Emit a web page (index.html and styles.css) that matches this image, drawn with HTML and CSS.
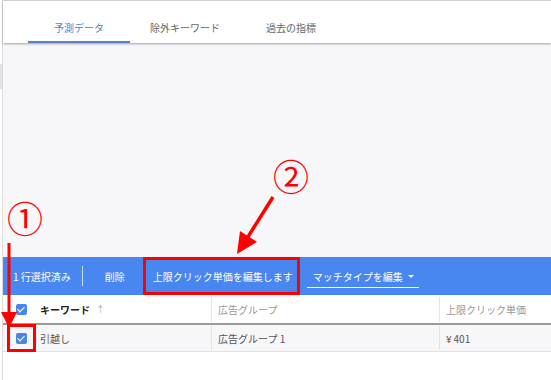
FILE: index.html
```html
<!DOCTYPE html>
<html lang="ja">
<head>
    <meta charset="UTF-8">
    <title>キーワードプランナー</title>
    <link rel="stylesheet" href="styles.css">
</head>
<body>
    <div class="frame">
        <!-- Tabs -->
        <div class="tabs">
            <a class="tab active" href="#forecast">予測データ</a>
            <a class="tab" href="#negative">除外キーワード</a>
            <a class="tab" href="#history">過去の指標</a>
        </div>

        <!-- Empty area above table -->
        <div class="content-area">
            <div class="scroll-mark"></div>
        </div>

        <!-- Selection bar -->
        <div class="action-bar">
            <span class="selected-count">1 行選択済み</span>
            <span class="bar-divider"></span>
            <button class="bar-btn btn-delete">削除</button>
            <button class="bar-btn btn-bid">上限クリック単価を編集します</button>
            <button class="bar-btn btn-match">マッチタイプを編集 <span class="caret"></span></button>
        </div>

        <!-- Keyword table -->
        <div class="kw-table">
            <div class="kw-row kw-head">
                <div class="cell cell-kw">
                    <span class="checkbox"></span>
                    <span class="kw-title">キーワード</span>
                    <span class="sort-arrow">↑</span>
                </div>
                <div class="cell cell-col">広告グループ</div>
                <div class="cell cell-col">上限クリック単価</div>
            </div>
            <div class="kw-row kw-data">
                <div class="cell cell-kw">
                    <span class="checkbox"></span>
                    <span>引越し</span>
                </div>
                <div class="cell cell-col">広告グループ 1</div>
                <div class="cell cell-col">¥&#8201;401</div>
            </div>
        </div>
    </div>

    <!-- Red annotations -->
    <span class="mark mark-1">①</span>
    <span class="mark mark-2">②</span>
    <svg class="annotations" width="551" height="380" viewBox="0 0 551 380">
        <line x1="9" y1="243" x2="9" y2="314" stroke="#f00" stroke-width="3"/>
        <polygon points="1,312 17,312 9,328" fill="#f00"/>
        <line x1="273" y1="197" x2="246" y2="240" stroke="#f00" stroke-width="3.5"/>
        <polygon points="237,254 240,231 257,242" fill="#f00"/>
        <rect x="8.5" y="325.5" width="26" height="25" fill="none" stroke="#f00" stroke-width="3"/>
        <rect x="144.5" y="258.5" width="154" height="35" fill="none" stroke="#f00" stroke-width="3"/>
    </svg>
</body>
</html>
```

FILE: styles.css
```css
/* Reset */
* {
    margin: 0;
    padding: 0;
    box-sizing: border-box;
}

body {
    font-family: "Noto Sans CJK JP", "Noto Sans", sans-serif;
    font-size: 10px;
    background-color: white;
    width: 551px;
    height: 380px;
    overflow: hidden;
    position: relative;
}

.frame {
    margin-left: 2px;
    border-left: 1px solid #dcdcdc;
    border-top: 1px solid #d6d6d6;
    min-height: 380px;
}

/* Tabs */
.tabs {
    display: flex;
    height: 42px;
    padding-left: 25px;
    background-color: white;
    box-shadow: 0 1px 2px rgba(0, 0, 0, 0.35);
    position: relative;
    z-index: 1;
}

.tab {
    min-width: 102px;
    padding: 20px 20px 6px;
    line-height: 14px;
    text-align: center;
    color: #666;
    text-decoration: none;
    border-bottom: 2px solid transparent;
}

.tab.active {
    color: #5282d4;
    border-bottom-color: #5a80c4;
}

.content-area {
    height: 214px;
    background-color: #f7f6f9;
    padding-top: 21px;
}

.scroll-mark {
    width: 2px;
    height: 25px;
    margin-left: -3px;
    background-color: #e2e2e2;
}

/* Selection bar */
.action-bar {
    display: flex;
    align-items: center;
    height: 38px;
    padding-left: 10px;
    background-color: #4787ef;
    color: white;
}

.selected-count {
    white-space: nowrap;
}

.bar-divider {
    width: 1px;
    height: 20px;
    margin-left: 11px;
    background-color: rgba(255, 255, 255, 0.7);
}

.bar-btn {
    font-family: inherit;
    font-size: 10px;
    color: white;
    background: none;
    border: none;
    padding: 0 10px;
    white-space: nowrap;
}

.btn-delete {
    margin-left: 12px;
}

.btn-bid {
    margin-left: 8px;
}

.btn-match {
    margin-left: 4px;
    padding: 4px 5px 3px 6px;
    border-bottom: 1px solid white;
    display: flex;
    align-items: center;
    gap: 5px;
}

.caret {
    width: 0;
    height: 0;
    border-left: 3.5px solid transparent;
    border-right: 3.5px solid transparent;
    border-top: 3.5px solid white;
}

/* Table */
.kw-row {
    display: grid;
    grid-template-columns: 208px 228px 1fr;
}

.kw-head {
    height: 30px;
    background-color: white;
    border-bottom: 2px solid #9a9a9a;
    color: #999;
}

.kw-data {
    height: 27px;
    background-color: #f7f6f9;
    border-bottom: 1px solid #e2e2e2;
    color: #555;
}

.cell {
    display: flex;
    align-items: center;
    white-space: nowrap;
}

.cell-kw {
    padding-left: 13px;
    gap: 13px;
}

.cell-col {
    border-left: 1px solid #e4e4e4;
    padding-left: 6px;
}

.kw-head .cell-col {
    margin: 2px 0 1px;
}

.kw-data .cell-col {
    margin: 1px 0;
}

.kw-title {
    font-weight: bold;
    color: #222;
}

.sort-arrow {
    margin-left: -7px;
    color: #b0b0b0;
    font-size: 9px;
}

.checkbox {
    width: 11px;
    height: 11px;
    border-radius: 2px;
    background-color: #4a86e8;
    position: relative;
}

.checkbox::after {
    content: "";
    position: absolute;
    left: 3px;
    top: 1px;
    width: 3px;
    height: 6px;
    border-right: 1.5px solid white;
    border-bottom: 1.5px solid white;
    transform: rotate(45deg);
}

/* Annotations */
.annotations {
    position: absolute;
    top: 0;
    left: 0;
    pointer-events: none;
}

.mark {
    position: absolute;
    font-size: 36px;
    line-height: 1;
    color: #f00;
}

.mark-1 {
    left: 7px;
    top: 199px;
}

.mark-2 {
    left: 273px;
    top: 157px;
}
```
